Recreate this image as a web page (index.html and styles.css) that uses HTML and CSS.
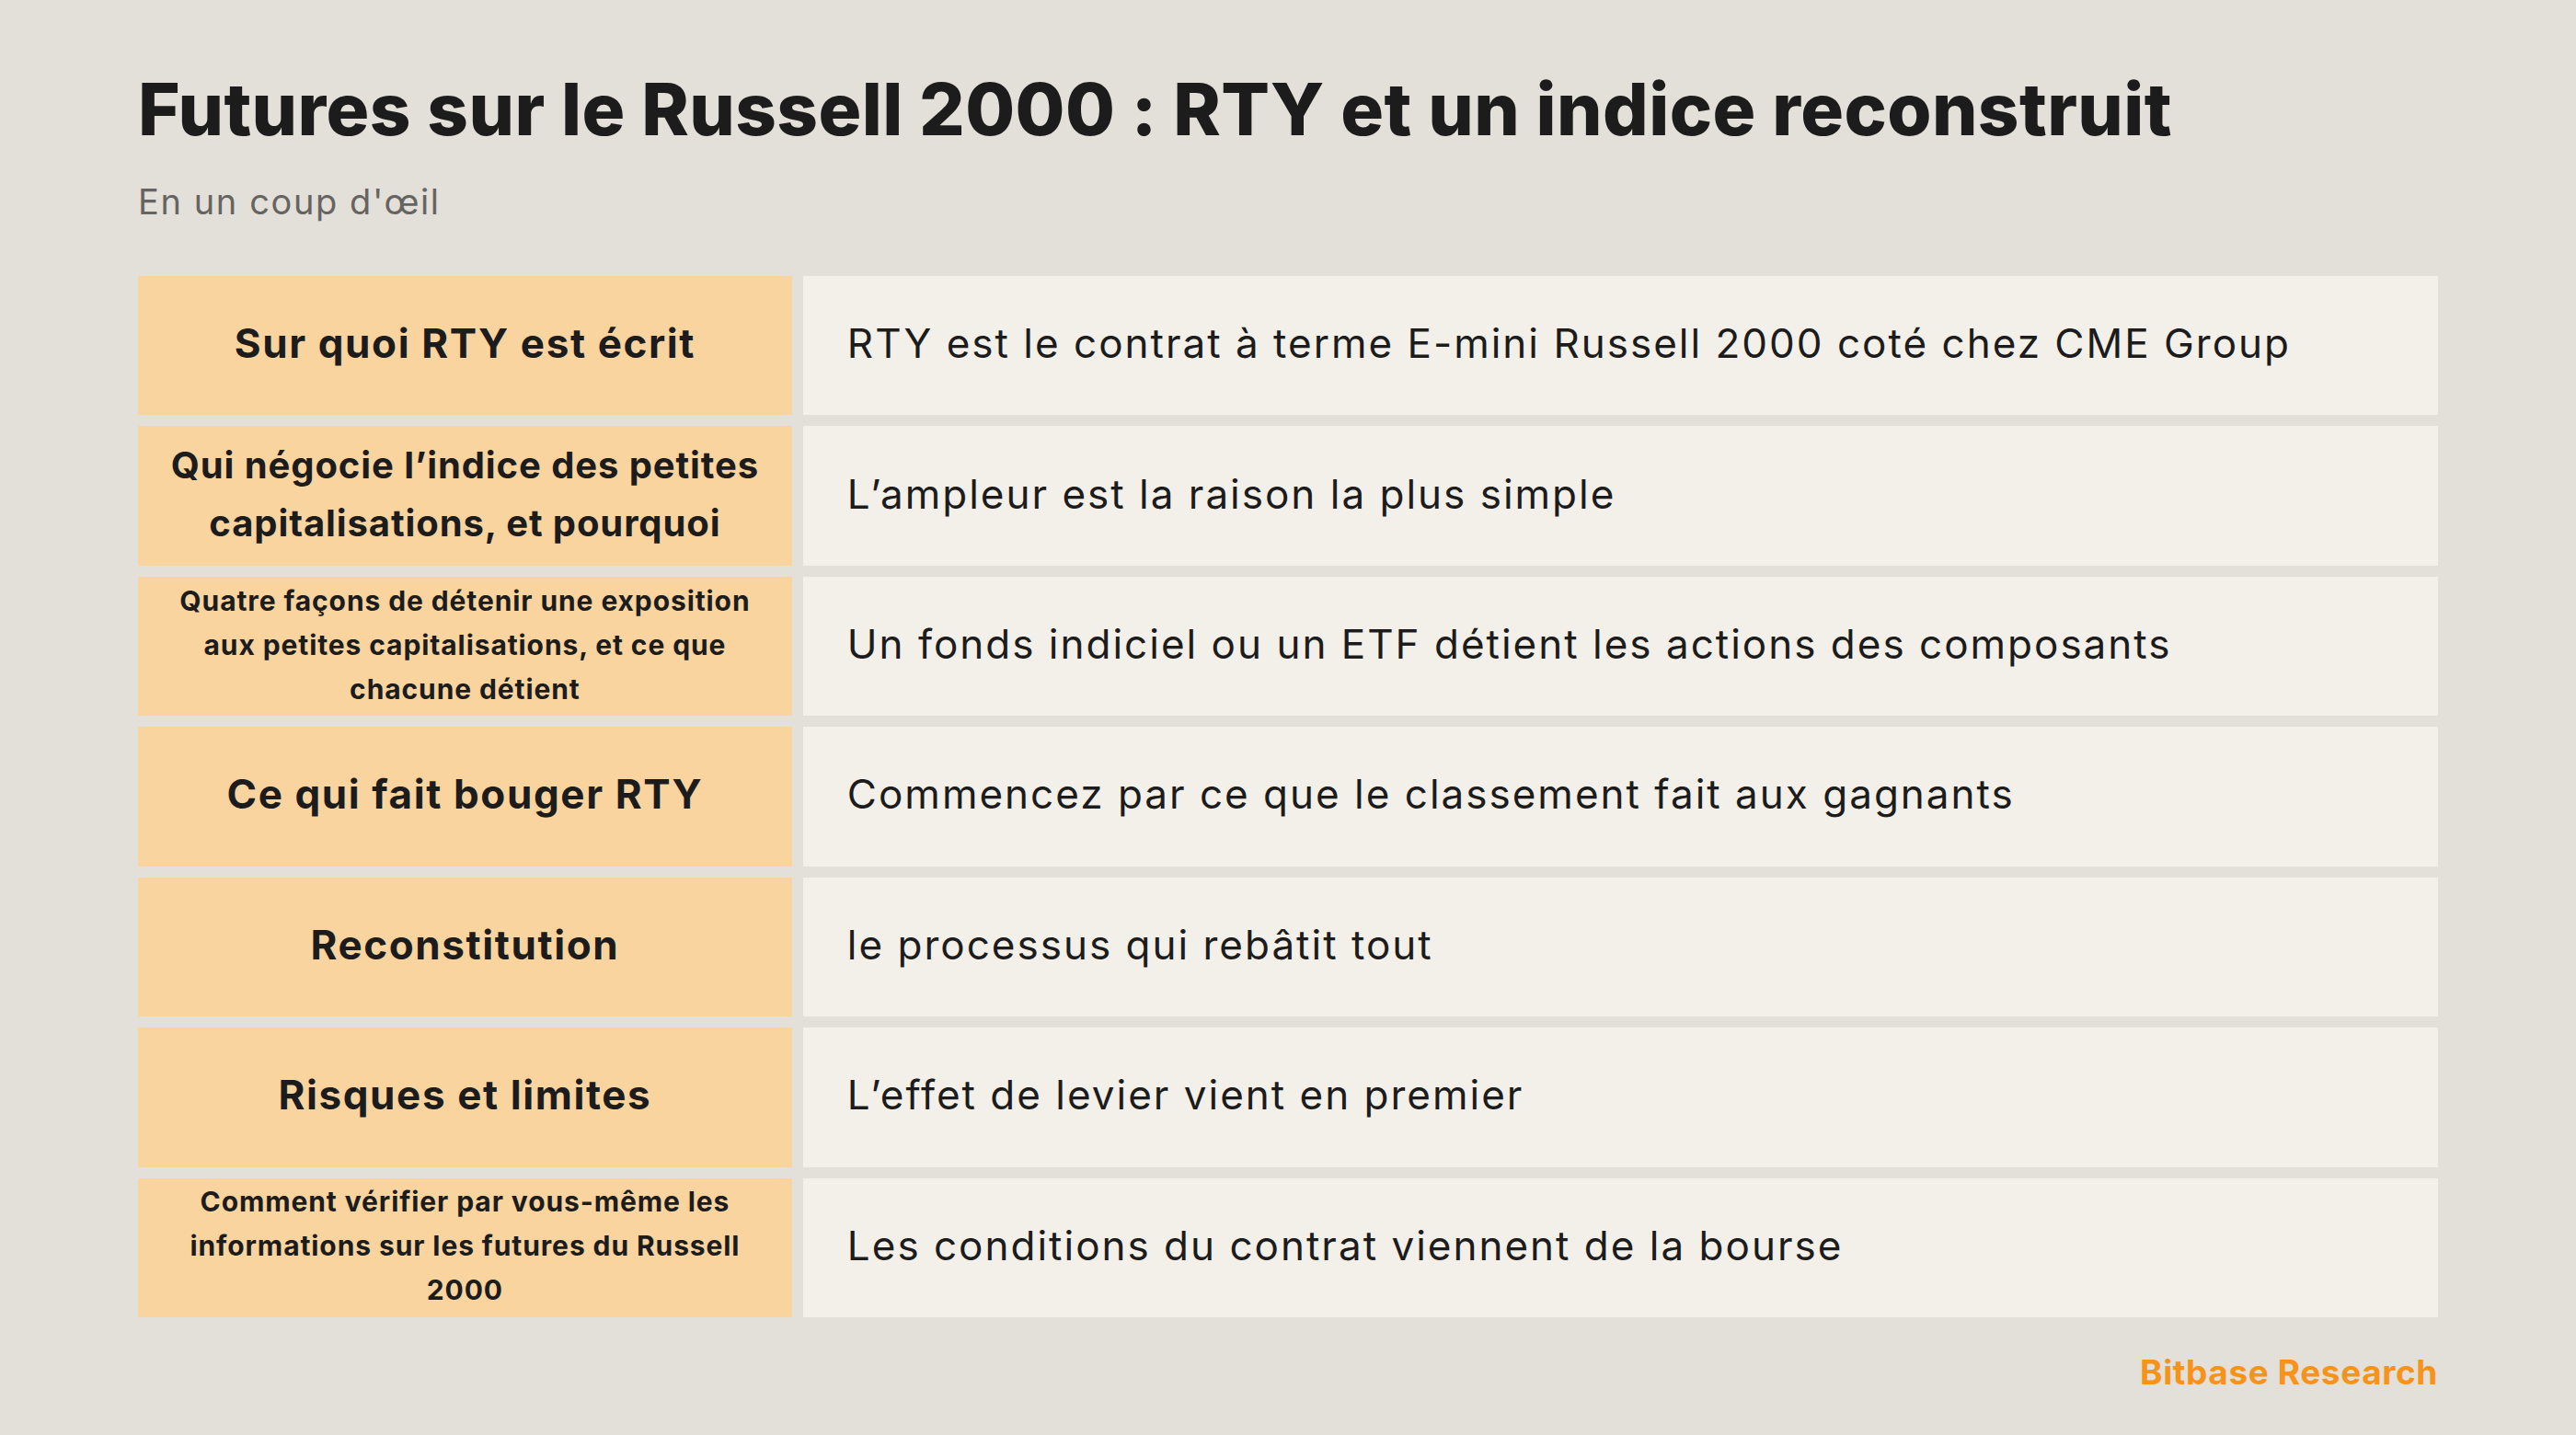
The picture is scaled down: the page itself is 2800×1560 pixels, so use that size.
FILE: index.html
```html
<!DOCTYPE html>
<html lang="fr">
<head>
<meta charset="utf-8">
<title>Futures sur le Russell 2000</title>
<link rel="stylesheet" href="styles.css">
</head>
<body>
<main class="page">
  <h1 class="title">Futures sur le Russell 2000 : RTY et un indice reconstruit</h1>
  <p class="subtitle">En un coup d'œil</p>
  <section class="table">
    <div class="label size-l">Sur quoi RTY est écrit</div>
    <div class="value">RTY est le contrat à terme E-mini Russell 2000 coté chez CME Group</div>

    <div class="label size-m">Qui négocie l’indice des petites<br>capitalisations, et pourquoi</div>
    <div class="value">L’ampleur est la raison la plus simple</div>

    <div class="label size-s">Quatre façons de détenir une exposition<br>aux petites capitalisations, et ce que<br>chacune détient</div>
    <div class="value">Un fonds indiciel ou un ETF détient les actions des composants</div>

    <div class="label size-l">Ce qui fait bouger RTY</div>
    <div class="value">Commencez par ce que le classement fait aux gagnants</div>

    <div class="label size-l">Reconstitution</div>
    <div class="value">le processus qui rebâtit tout</div>

    <div class="label size-l">Risques et limites</div>
    <div class="value">L’effet de levier vient en premier</div>

    <div class="label size-s">Comment vérifier par vous-même les<br>informations sur les futures du Russell<br>2000</div>
    <div class="value">Les conditions du contrat viennent de la bourse</div>
  </section>
  <footer class="brand">Bitbase Research</footer>
</main>
</body>
</html>
```

FILE: styles.css
```css
html, body {
  margin: 0;
  padding: 0;
}

body {
  background: #e3dfd9;
  width: 2800px;
  height: 1560px;
  overflow: hidden;
  font-family: "Inter", "Noto Sans", sans-serif;
  color: #1c1c1c;
}

.page {
  box-sizing: border-box;
  width: 2800px;
  height: 1560px;
  padding: 72px 150px 0 150px;
  display: flex;
  flex-direction: column;
}

.title {
  margin: 0;
  font-size: 78px;
  line-height: 94px;
  font-weight: 800;
  letter-spacing: 0.4px;
  color: #1c1c1c;
}

.subtitle {
  margin: 30px 0 0 0;
  font-size: 38px;
  line-height: 46px;
  font-weight: 400;
  letter-spacing: 1.6px;
  color: #666461;
}

.table {
  margin-top: 58px;
  height: 1132px;
  display: grid;
  grid-template-columns: 2fr 5fr;
  grid-template-rows: repeat(7, 1fr);
  gap: 12px;
}

.label {
  background: #f9d49e;
  display: flex;
  align-items: center;
  justify-content: center;
  text-align: center;
  font-weight: 700;
  padding: 0 20px 4px 20px;
  color: #1c1c1c;
}

.size-l {
  font-size: 44px;
  line-height: 1.3;
  letter-spacing: 1.6px;
}

.size-m {
  font-size: 40px;
  line-height: 63px;
  letter-spacing: 0.9px;
}

.size-s {
  font-size: 30px;
  line-height: 48px;
  letter-spacing: 0.9px;
}

.value {
  background: #f3f0e9;
  display: flex;
  align-items: center;
  padding: 0 48px 5px 48px;
  font-size: 44px;
  font-weight: 400;
  letter-spacing: 2px;
  color: #1c1c1c;
}

.brand {
  margin-top: 38px;
  align-self: flex-end;
  font-size: 37px;
  line-height: 44px;
  font-weight: 700;
  letter-spacing: 0.6px;
  color: #f7931a;
}
```
